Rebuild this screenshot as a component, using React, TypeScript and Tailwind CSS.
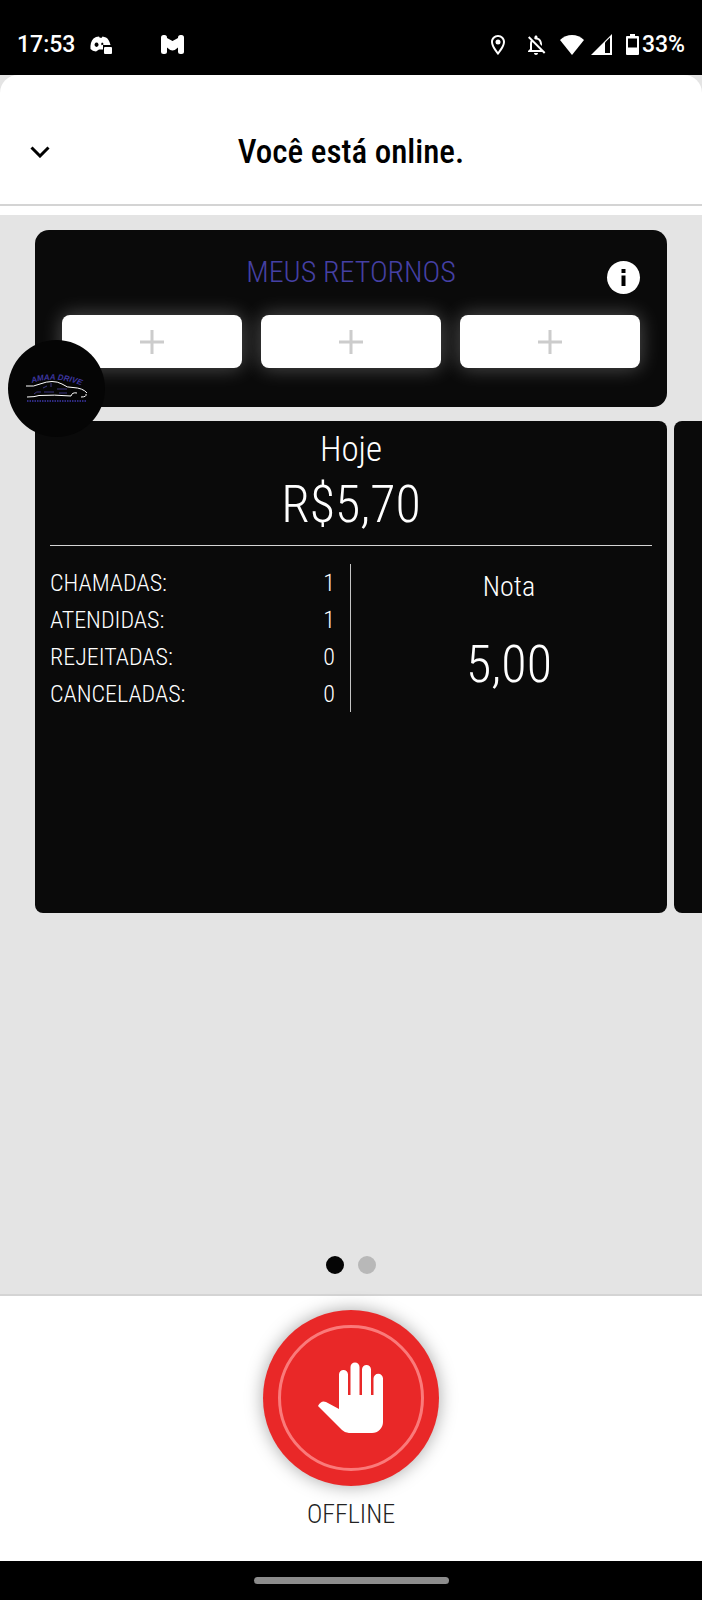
import { useState } from "react";
import {
  MdOutlineLocationOn,
  MdOutlineNotificationsOff,
} from "react-icons/md";

const stats = [
  { label: "CHAMADAS:", value: 1 },
  { label: "ATENDIDAS:", value: 1 },
  { label: "REJEITADAS:", value: 0 },
  { label: "CANCELADAS:", value: 0 },
];

function StatusBar() {
  return (
    <div className="flex h-[75px] items-end justify-between bg-black px-[17px] pb-[17px] font-['Roboto',sans-serif] text-[23px] font-medium leading-[27px] text-white">
      <div className="flex items-center">
        <span>17:53</span>
        <svg viewBox="0 0 22 18" className="ml-[15px] h-[18px] w-[22px]" fill="currentColor">
          <path
            fillRule="evenodd"
            d="M6 1L9 .5l.8 1.300h2L12.500.5l3.500 1Q19 3 20.500 9H13v4.500H9L6 15.500Q2.500 15 .5 13Q0 6 3.500 2.500zM6.500 6.500a2 2.200 0 1 0 .1 0zM12 6.500q1.500.2 1.500 2l-2 .8q-.8-2 .5-2.800z"
          />
          <rect x="14" y="11" width="8" height="7" rx="1" />
        </svg>
        <svg viewBox="0 0 23 19" className="ml-[49px] h-[19px] w-[23px]" fill="currentColor">
          <rect x="0" y="0" width="6" height="19" rx="2.5" />
          <rect x="17" y="0" width="6" height="19" rx="2.5" />
          <path d="M6 3l5.500 3L17 3v9.500q-3 3-5.500 3T6 12.500z" />
        </svg>
      </div>
      <div className="flex items-center">
        <MdOutlineLocationOn className="size-6" />
        <MdOutlineNotificationsOff className="ml-[14px] size-6" />
        <svg viewBox="0 0 24 20" className="ml-3 h-5 w-6" fill="currentColor">
          <path d="M0 5C3.500 1.800 7.500 0 12 0s8.500 1.800 12 5L12 20z" />
        </svg>
        <svg viewBox="0 0 21 21" className="ml-[7px] size-[21px]">
          <path d="M0 21L21 0v21z" fill="currentColor" />
          <path d="M14 8.500L19 3.500V19h-5z" fill="#000" />
        </svg>
        <svg viewBox="0 0 13 21" className="ml-[14px] h-[21px] w-[13px]" fill="currentColor">
          <path
            fillRule="evenodd"
            d="M4 0h5v2h3a1 1 0 0 1 1 1v17a1 1 0 0 1-1 1H1a1 1 0 0 1-1-1V3a1 1 0 0 1 1-1h3zM2 4.500v9h9v-9z"
          />
        </svg>
        <span className="ml-[3px]">33%</span>
      </div>
    </div>
  );
}

function BrandLogo() {
  return (
    <svg viewBox="0 0 62 30" className="h-[30px] w-[62px]" fill="none">
      <defs>
        <path id="brand-arc" d="M6 9Q30 1 57 12" />
      </defs>
      <text
        fill="#3d36a0"
        fontSize="8"
        fontWeight="700"
        fontStyle="italic"
        fontFamily="Liberation Sans, sans-serif"
      >
        <textPath href="#brand-arc">AMAA DRIVE</textPath>
      </text>
      <path d="M0 12Q8 13 14 10Q27 5 36 10Q41 14 47 13.500Q57 14 61 19" stroke="#fff" strokeWidth="1" />
      <path d="M1 23Q9 23 13 21.500Q28 20.500 45 22M45 22Q46 18 51 19M55 23Q61 23 60 20" stroke="#fff" strokeWidth="1" />
      <path d="M8 20Q10 17 15 18M25 9v4M17 14l4-2M31 15h10M18 18h10M33 19h8" stroke="#3a3580" strokeWidth="1" />
      <path d="M1 27h60" stroke="#2f2a80" strokeWidth="2" strokeDasharray="1.500 1" />
    </svg>
  );
}

function ReturnsCard() {
  return (
    <section className="relative rounded-[14px] bg-[#0a0a0a] px-[27px] pb-[39px] pt-[23px]">
      <div className="relative flex justify-center">
        <h2 className="text-[30px] leading-[38px] text-[#4540a4]">MEUS RETORNOS</h2>
        <button
          type="button"
          aria-label="Informações"
          className="absolute right-0 top-2 size-[33px] rounded-full bg-white text-black"
        >
          <svg viewBox="0 0 33 33" fill="currentColor">
            <path d="M14.500 8h4v4h-4zM14.500 14.500h4V25h-4z" />
          </svg>
        </button>
      </div>
      <div className="mt-6 grid grid-cols-3 gap-[19px]">
        {[1, 2, 3].map((slot) => (
          <button
            key={slot}
            type="button"
            aria-label={`Adicionar retorno ${slot}`}
            className="flex h-[53px] items-center justify-center rounded-lg bg-white text-[#cccccc] shadow-[0_0_20px_rgba(255,255,255,0.3)]"
          >
            <svg viewBox="0 0 24 24" className="size-6" stroke="currentColor" strokeWidth="3">
              <path d="M12 0v24M0 12h24" />
            </svg>
          </button>
        ))}
      </div>
      {/* Floating brand bubble */}
      <button
        type="button"
        aria-label="Amaa Drive"
        className="absolute -left-[27px] top-[110px] z-10 flex size-[97px] items-center justify-center rounded-full bg-[#050505]"
      >
        <BrandLogo />
      </button>
    </section>
  );
}

function TodayCard() {
  return (
    <section className="h-[492px] w-full shrink-0 rounded-lg bg-[#0a0a0a] px-[15px] pt-2 text-center text-white">
      <h2 className="text-[35px] leading-[42px]">Hoje</h2>
      <p className="text-[52px] leading-[68px]">R$5,70</p>
      <hr className="mt-[6px] border-[#d4d4d4]" />
      <div className="mt-[18px] grid grid-cols-2">
        <table className="w-full border-r border-[#c4c4c4] text-[24px] leading-[37px]">
          <tbody>
            {stats.map((stat) => (
              <tr key={stat.label}>
                <th scope="row" className="p-0 pt-px text-left font-light leading-[36px]">
                  {stat.label}
                </th>
                <td className="p-0 pr-[15px] pt-px text-right leading-[36px]">{stat.value}</td>
              </tr>
            ))}
          </tbody>
        </table>
        <div className="pl-[15px]">
          <h3 className="pt-1 text-[28px] leading-[38px]">Nota</h3>
          <p className="pt-[25px] text-[52px] leading-[68px]">5,00</p>
        </div>
      </div>
    </section>
  );
}

export default function App() {
  const [page, setPage] = useState(0);

  return (
    <div className="flex min-h-screen flex-col overflow-hidden bg-[#e4e4e4] font-['Roboto_Condensed','Roboto',sans-serif] font-light">
      <StatusBar />

      <header className="rounded-t-[18px] bg-white pb-[9px]">
        <div className="grid h-[131px] grid-cols-[1fr_auto_1fr] items-center border-b-2 border-[#d4d4d4] px-6 pt-6">
          <button type="button" aria-label="Fechar" className="flex h-8 w-8 items-center justify-center">
            <svg viewBox="0 0 20 12" className="h-3 w-5" fill="none" stroke="#000" strokeWidth="3">
              <path d="M1.500 1.500L10 10l8.500-8.500" />
            </svg>
          </button>
          <h1 className="text-[33px] font-medium leading-[44px]">Você está online.</h1>
        </div>
      </header>

      <main className="flex flex-1 flex-col px-[35px] pt-[15px]">
        <ReturnsCard />
        <div className="mt-[14px] flex gap-[7px]">
          <TodayCard />
          <section aria-label="Semana" className="w-full shrink-0 rounded-lg bg-[#0a0a0a]" />
        </div>
        <div className="mt-auto flex justify-center gap-[14px] pb-5">
          {[0, 1].map((i) => (
            <button
              key={i}
              type="button"
              aria-label={`Página ${i + 1}`}
              onClick={() => setPage(i)}
              className={`size-[18px] rounded-full ${page === i ? "bg-[#050505]" : "bg-[#b8b8b8]"}`}
            />
          ))}
        </div>
      </main>

      <footer className="flex h-[267px] flex-col items-center border-t-2 border-[#d4d4d4] bg-white pt-[14px]">
        <button
          type="button"
          aria-labelledby="offline-label"
          className="flex size-[176px] items-center justify-center rounded-full bg-[#e92828] shadow-[0_0_18px_rgba(0,0,0,0.35)]"
        >
          <span className="flex size-[146px] items-center justify-center rounded-full border-[3px] border-[#fa7a7a]">
            <svg viewBox="0 0 66 72" className="h-[72px] w-[66px]" fill="#fff">
              <path d="M21 47V12.500a4.500 4.500 0 0 1 9 0V33h2.500V5a4.500 4.500 0 0 1 9 0V33H44V7.500a4.500 4.500 0 0 1 9 0V33h2.500V16.500a4.500 4.500 0 0 1 9.500 0V60a11 11 0 0 1-11 11H31q-4 0-7-3L0 44q3-6 8-4l13 7z" />
            </svg>
          </span>
        </button>
        <span id="offline-label" className="mt-3 text-[26px] leading-[32px] text-[#222]">
          OFFLINE
        </span>
      </footer>

      <div className="flex h-[39px] items-center justify-center bg-black">
        <div className="h-[7px] w-[195px] rounded-full bg-[#8c8c8c]" />
      </div>
    </div>
  );
}
